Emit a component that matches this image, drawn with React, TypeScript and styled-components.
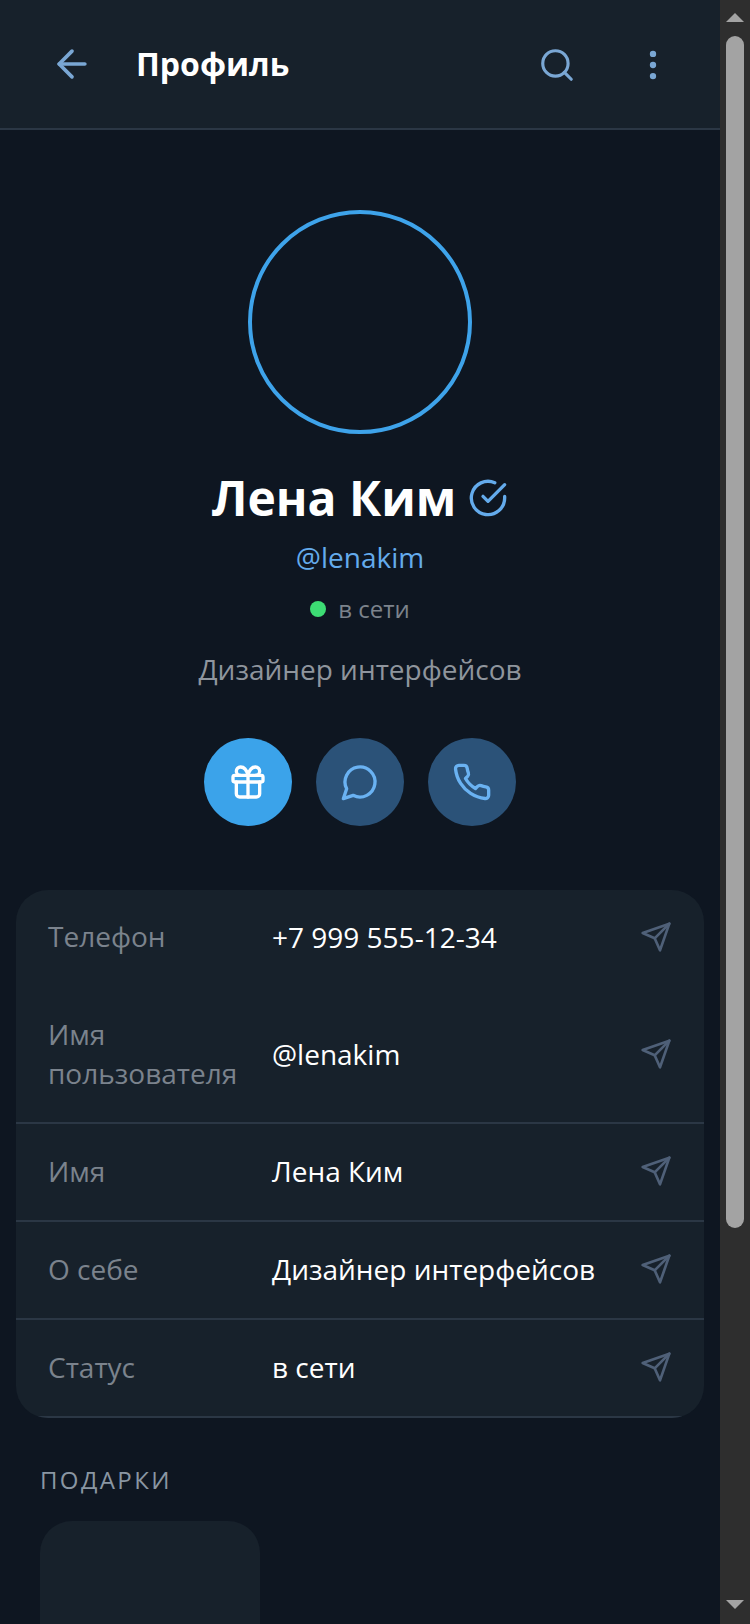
import React from "react";
import styled, { createGlobalStyle } from "styled-components";
import { ArrowLeft, Search, EllipsisVertical, Gift } from "lucide-react";

const Global = createGlobalStyle`
  html { background: #0e1621; }
  body { margin: 0; background: #0e1621; font-family: "Open Sans", "Noto Sans", sans-serif; color: #fff; }
`;

const Shell = styled.div`
  display: flex;
  height: 100vh;
  overflow: hidden;
`;

const Page = styled.main`
  flex: 1;
  min-width: 0;
  overflow: hidden;
  display: flex;
  flex-direction: column;
`;

const ScrollTrack = styled.aside`
  flex: none;
  width: 30px;
  background: #2e2e2e;
  display: flex;
  flex-direction: column;
  align-items: center;
  padding: 13px 0 15px;
  box-sizing: border-box;
`;

const ArrowUp = styled.span`
  flex: none;
  border-left: 9px solid transparent;
  border-right: 9px solid transparent;
  border-bottom: 9px solid #a3a3a3;
`;

const ArrowDown = styled.span`
  flex: none;
  margin-top: auto;
  border-left: 9px solid transparent;
  border-right: 9px solid transparent;
  border-top: 9px solid #a3a3a3;
`;

const Thumb = styled.span`
  flex: none;
  width: 18px;
  height: 1192px;
  margin-top: 14px;
  border-radius: 9px;
  background: #a3a3a3;
`;

const Header = styled.header`
  flex: none;
  height: 128px;
  background: #17212b;
  border-bottom: 2px solid #2b3745;
  display: flex;
  align-items: center;
  padding: 0 19px 0 24px;
`;

const HeaderButton = styled.button`
  width: 96px;
  height: 96px;
  padding: 0;
  border: 0;
  background: none;
  color: #7aa7d4;
  display: flex;
  align-items: center;
  justify-content: center;
`;

const ToolButton = styled(HeaderButton)`
  padding-top: 2px;
`;

const Title = styled.h1`
  flex: 1;
  margin: 0 0 0 16px;
  font-size: 32px;
  line-height: 40px;
  font-weight: 700;
`;

const Hero = styled.section`
  display: flex;
  flex-direction: column;
  align-items: center;
  padding-top: 80px;
`;

const Avatar = styled.div`
  width: 224px;
  height: 224px;
  box-sizing: border-box;
  border: 4px solid #3ea3ea;
  border-radius: 50%;
`;

const NameRow = styled.div`
  display: flex;
  align-items: center;
  gap: 12px;
  margin-top: 32px;
  color: #64abec;
`;

const Name = styled.h2`
  margin: 0;
  font-size: 48px;
  line-height: 64px;
  font-weight: 700;
  color: #fff;
`;

const Username = styled.div`
  margin-top: 7px;
  font-size: 28px;
  line-height: 40px;
  color: #64abec;
`;

const StatusRow = styled.div`
  display: flex;
  align-items: center;
  gap: 12px;
  margin-top: 12px;
  font-size: 24px;
  line-height: 40px;
  color: #7c838c;
`;

const Dot = styled.span`
  width: 16px;
  height: 16px;
  border-radius: 50%;
  background: #3ddc74;
`;

const Bio = styled.p`
  margin: 20px 0 0;
  font-size: 28px;
  line-height: 40px;
  color: #8f959d;
`;

const Actions = styled.div`
  display: flex;
  gap: 24px;
  margin-top: 49px;
`;

const ActionButton = styled.button<{ $primary?: boolean }>`
  width: 88px;
  height: 88px;
  padding: 0;
  border: 0;
  border-radius: 50%;
  background: ${(p) => (p.$primary ? "#3ba3ea" : "#2b5278")};
  color: ${(p) => (p.$primary ? "#fff" : "#6ab2f2")};
  display: flex;
  align-items: center;
  justify-content: center;
`;

const Card = styled.section`
  flex: none;
  margin: 64px 16px 0;
  background: #17212b;
  border-radius: 32px;
  overflow: hidden;
`;

const Row = styled.div<{ $line?: boolean }>`
  display: flex;
  align-items: center;
  padding: 27px 32px 29px;
  border-bottom: 2px solid ${(p) => (p.$line ? "#2b3745" : "transparent")};
  font-size: 28px;
`;

const Label = styled.div`
  width: 224px;
  flex: none;
  line-height: 39.2px;
  color: #7b838d;
`;

const Value = styled.div`
  flex: 1;
  line-height: 40px;
  color: #fff;
`;

const CopyIcon = styled.svg`
  flex: none;
  width: 32px;
  height: 32px;
  fill: none;
  stroke: #4f6078;
  stroke-width: 2;
  stroke-linecap: round;
  stroke-linejoin: round;
`;

const Glyph = styled.svg`
  width: 40px;
  height: 40px;
  flex: none;
  fill: none;
  stroke: currentColor;
  stroke-width: 2;
  stroke-linecap: round;
  stroke-linejoin: round;
`;

const GiftsTitle = styled.h3`
  margin: 44px 40px 0;
  font-size: 24px;
  line-height: 36px;
  font-weight: 400;
  letter-spacing: 2.4px;
  text-transform: uppercase;
  color: #8a96a3;
`;

const GiftGrid = styled.div`
  display: grid;
  grid-template-columns: repeat(3, 220px);
  margin: 23px 40px 0;
`;

const GiftCard = styled.div`
  height: 280px;
  background: #17212b;
  border-radius: 32px;
`;

const rows = [
  { label: "Телефон", value: "+7 999 555-12-34", line: false },
  { label: "Имя пользователя", value: "@lenakim", line: true },
  { label: "Имя", value: "Лена Ким", line: true },
  { label: "О себе", value: "Дизайнер интерфейсов", line: true },
  { label: "Статус", value: "в сети", line: true },
];

export default function App() {
  return (
    <Shell>
      <Global />
      <Page>
        <Header>
          <HeaderButton><ArrowLeft size={44} strokeWidth={2} /></HeaderButton>
          <Title>Профиль</Title>
          <ToolButton><Search size={38} strokeWidth={2} /></ToolButton>
          <ToolButton><EllipsisVertical size={38} strokeWidth={2} /></ToolButton>
        </Header>
        <Hero>
          <Avatar />
          <NameRow>
            <Name>Лена Ким</Name>
            <Glyph viewBox="0 0 24 24">
              <path d="M22 11.08V12a10 10 0 1 1-5.93-9.14" />
              <path d="m9 11 3 3L22 4" />
            </Glyph>
          </NameRow>
          <Username>@lenakim</Username>
          <StatusRow><Dot />в сети</StatusRow>
          <Bio>Дизайнер интерфейсов</Bio>
          <Actions>
            <ActionButton $primary><Gift size={40} strokeWidth={2} /></ActionButton>
            <ActionButton>
              <Glyph viewBox="0 0 24 24"><path d="M7.9 20A9 9 0 1 0 4 16.1L2 22Z" /></Glyph>
            </ActionButton>
            <ActionButton>
              <Glyph viewBox="0 0 24 24">
                <path d="M22 16.92v3a2 2 0 0 1-2.18 2 19.79 19.79 0 0 1-8.63-3.07 19.5 19.5 0 0 1-6-6 19.79 19.79 0 0 1-3.07-8.67A2 2 0 0 1 4.11 2h3a2 2 0 0 1 2 1.72 12.84 12.84 0 0 0 .7 2.81 2 2 0 0 1-.45 2.11L8.09 9.91a16 16 0 0 0 6 6l1.27-1.27a2 2 0 0 1 2.11-.45 12.84 12.84 0 0 0 2.81.7A2 2 0 0 1 22 16.92z" />
              </Glyph>
            </ActionButton>
          </Actions>
        </Hero>
        <Card>
          {rows.map((r) => (
            <Row key={r.label} $line={r.line}>
              <Label>{r.label}</Label>
              <Value>{r.value}</Value>
              <CopyIcon viewBox="0 0 24 24">
                <path d="m22 2-7 20-4-9-9-4Z" />
                <path d="M22 2 11 13" />
              </CopyIcon>
            </Row>
          ))}
        </Card>
        <GiftsTitle>Подарки</GiftsTitle>
        <GiftGrid><GiftCard /></GiftGrid>
      </Page>
      <ScrollTrack>
        <ArrowUp />
        <Thumb />
        <ArrowDown />
      </ScrollTrack>
    </Shell>
  );
}
